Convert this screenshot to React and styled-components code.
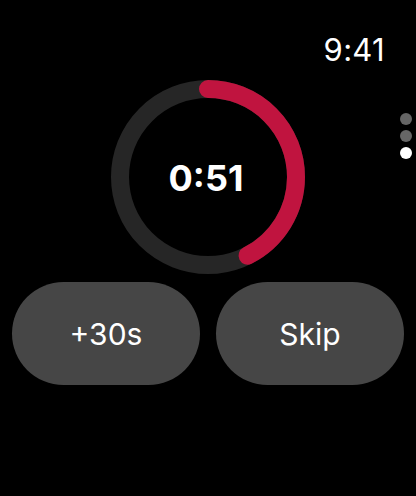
import styled, { createGlobalStyle } from "styled-components";

const GlobalStyle = createGlobalStyle`
    html, body {
        margin: 0;
        padding: 0;
        background: #000;
    }
    body {
        font-family: Inter, "Noto Sans", sans-serif;
        -webkit-font-smoothing: antialiased;
    }
`;

const Screen = styled.div`
    width: 416px;
    height: 496px;
    background-color: #000;
    color: #fff;
    position: relative;
    overflow: hidden;
    display: flex;
    flex-direction: column;
    box-sizing: border-box;
`;

const StatusBar = styled.div`
    display: flex;
    justify-content: flex-end;
    padding: 34px 31px 0 0;
    height: 50px;
    box-sizing: border-box;
`;

const Clock = styled.div`
    font-size: 31px;
    line-height: 1;
    font-weight: 400;
    letter-spacing: 0.3px;
`;

const PageDots = styled.div`
    position: absolute;
    right: 4px;
    top: 113px;
    display: flex;
    flex-direction: column;
    gap: 5px;
`;

const Dot = styled.div`
    width: 12px;
    height: 12px;
    border-radius: 50%;
    background-color: ${(p) => (p.$active ? "#fff" : "#666")};
`;

const RingWrap = styled.div`
    margin-top: 30px;
    align-self: center;
    width: 194px;
    height: 194px;
    position: relative;
    display: flex;
    justify-content: center;
    align-items: center;
`;

const RingSvg = styled.svg`
    position: absolute;
    inset: 0;
`;

const TimeLeft = styled.div`
    position: relative;
    top: 1px;
    right: 2px;
    font-size: 36px;
    font-weight: 700;
`;

const ButtonRow = styled.div`
    display: grid;
    grid-template-columns: 1fr 1fr;
    gap: 16px;
    padding: 0 12px;
    margin-top: 8px;
`;

const PillButton = styled.button`
    height: 103px;
    border: none;
    border-radius: 52px;
    background-color: #464646;
    color: #fff;
    font-family: Inter, "Noto Sans", sans-serif;
    font-size: 30px;
    font-weight: 400;
    cursor: pointer;
`;

function Ring({ progress }) {
    const r = 88;
    const c = 2 * Math.PI * r;
    return (
        <RingSvg width="194" height="194" viewBox="0 0 194 194">
            <circle cx="97" cy="97" r={r} fill="none" stroke="#262626" strokeWidth="18" />
            <circle
                cx="97"
                cy="97"
                r={r}
                fill="none"
                stroke="#c0143f"
                strokeWidth="18"
                strokeLinecap="round"
                strokeDasharray={`${c * progress} ${c}`}
                transform="rotate(-90 97 97)"
            />
        </RingSvg>
    );
}

export default function App() {
    return (
        <>
            <GlobalStyle />
            <Screen>
                <StatusBar>
                    <Clock>9:41</Clock>
                </StatusBar>
                <PageDots>
                    <Dot />
                    <Dot />
                    <Dot $active />
                </PageDots>
                <RingWrap>
                    <Ring progress={51 / 120} />
                    <TimeLeft>0:51</TimeLeft>
                </RingWrap>
                <ButtonRow>
                    <PillButton>+30s</PillButton>
                    <PillButton>Skip</PillButton>
                </ButtonRow>
            </Screen>
        </>
    );
}
